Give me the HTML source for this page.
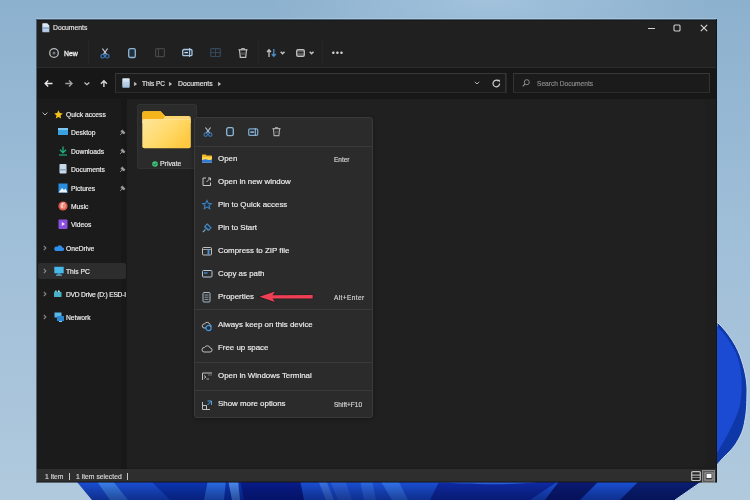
<!DOCTYPE html>
<html><head><meta charset="utf-8">
<style>
*{margin:0;padding:0;box-sizing:border-box}
html,body{width:750px;height:500px;overflow:hidden}
body{position:relative;font-family:"Liberation Sans",sans-serif;background:radial-gradient(ellipse 220px 60px at 490px 0px,rgba(170,200,225,.75),rgba(170,200,225,0)),linear-gradient(180deg,#8cb1ce 0%,#9fbed8 45%,#b0c9dd 100%);color:#fff}
.a{position:absolute}
.t{position:absolute;white-space:nowrap;line-height:1;will-change:transform;-webkit-text-stroke:0.15px currentColor}
svg{position:absolute;overflow:visible}
</style></head><body>
<svg class="a" style="left:0;top:0" width="750" height="500" viewBox="0 0 750 500">
  <defs>
    <clipPath id="bandclip"><path d="M77 482 L92 500 L675 500 L701 482 Z"/></clipPath>
    <linearGradient id="vdark" x1="0" y1="482" x2="0" y2="500" gradientUnits="userSpaceOnUse">
      <stop offset="0" stop-color="#000" stop-opacity="0"/><stop offset="1" stop-color="#000838" stop-opacity=".45"/>
    </linearGradient>
  </defs>
  <g clip-path="url(#bandclip)">
    <rect x="70" y="480" width="640" height="20" fill="#1a4fd8"/>
    <path d="M96 480 L112 480 L128 500 L110 500 Z" fill="#3a80f0"/>
    <path d="M150 480 L250 480 L262 500 L170 500 Z" fill="#0c36b8"/>
    <path d="M208 480 L226 480 L224 500 L204 500 Z" fill="#2a6ae8"/>
    <path d="M228 480 L238 480 L240 500 L232 500 Z" fill="#4a88f0"/>
    <path d="M240 480 L300 480 L304 500 L244 500 Z" fill="#081c90"/>
    <path d="M318 480 L326 480 L334 500 L326 500 Z" fill="#3a72e8"/>
    <path d="M330 480 L345 480 L352 500 L338 500 Z" fill="#2a60e0"/>
    <path d="M360 480 L372 480 L376 500 L364 500 Z" fill="#2c68e8"/>
    <path d="M380 480 L398 480 L408 500 L392 500 Z" fill="#3272f0"/>
    <path d="M440 480 L560 480 L530 500 L430 500 Z" fill="#0e2aa8"/>
    <path d="M430 482 C470 484 500 486 540 482 L520 480 L430 480 Z" fill="#2a60e0"/>
    <path d="M560 480 L600 480 L580 500 L545 500 Z" fill="#0a1a78"/>
    <path d="M600 480 L640 480 L620 500 L582 500 Z" fill="#1a50d8"/>
    <path d="M640 480 L710 480 L680 500 L620 500 Z" fill="#0a1f78"/>
    <rect x="70" y="480" width="640" height="20" fill="url(#vdark)"/>
  </g>
  <path d="M701 482 L675 500" stroke="#c4d8ea" stroke-width="1"/>
  <path d="M717 322 C729 333 738 348 741.5 360 C745.5 372 747.3 383 747 392 C746.8 405 746.5 412 745 420 C743.5 430 740.5 436 737.5 441 C733.5 448 729 452 725 456 C721 460 718.5 463 716 466 Z" fill="#0e38a8" stroke="#c4d8ea" stroke-width="1"/>
  <path d="M717 326 C728 337 736 350 739 362 C741.5 372 742 382 741.5 392 C741 404 738 414 733.6 422 C730 430 727 436 724.5 440 C721.5 445 719 450 717 453 Z" fill="#1b4bd2"/>
</svg>
<div class="a" style="left:36px;top:19px;width:681px;height:464px;background:rgba(20,24,28,.55);"></div>
<div class="a" style="left:37px;top:20px;width:680px;height:47px;background:#202020;"></div>
<div class="a" style="left:37px;top:20px;width:680px;height:1px;background:#161a1d;"></div>
<div class="a" style="left:37px;top:67px;width:680px;height:1px;background:#2c2c2c;"></div>
<div class="a" style="left:37px;top:68px;width:680px;height:31px;background:#171717;"></div>
<div class="a" style="left:37px;top:99px;width:84px;height:370px;background:#1b1b1b;"></div>
<div class="a" style="left:121px;top:99px;width:6px;height:370px;background:#181818;"></div>
<div class="a" style="left:127px;top:99px;width:590px;height:370px;background:#202020;"></div>
<div class="a" style="left:127px;top:467px;width:590px;height:2px;background:#1d1d1d;"></div>
<div class="a" style="left:705px;top:99px;width:11px;height:370px;background:#1e1e1e;"></div>
<div class="a" style="left:37px;top:469px;width:680px;height:12px;background:#2e2e2e;"></div>
<div class="a" style="left:37px;top:481px;width:680px;height:1px;background:#222;"></div>
<div class="a" style="left:36px;top:18px;width:681px;height:1px;background:rgba(200,220,238,.35);"></div>
<svg style="left:42px;top:22.5px" width="8" height="10" viewBox="0 0 8 10"><defs><linearGradient id="dgb" x1="0" y1="0" x2="0" y2="1"><stop offset="0" stop-color="#e8f0f8"/><stop offset="1" stop-color="#a8c4e0"/></linearGradient></defs><path d="M0.3 0.8 Q0.3 0.3 0.8 0.3 H5.2 L7.3 2.4 V8.8 Q7.3 9.3 6.8 9.3 H0.8 Q0.3 9.3 0.3 8.8 Z" fill="url(#dgb)"/><rect x="0.3" y="4.3" width="7" height="1.6" fill="#7a9cc0" opacity=".8"/></svg>
<div class="t" style="left:53.20px;top:25.24px;font-size:6.8px;color:#e6e6e6;font-weight:normal;">Documents</div>
<div class="a" style="left:648px;top:28px;width:7px;height:1px;background:#d0d0d0;"></div>
<svg style="left:673px;top:24px" width="8" height="8" viewBox="0 0 8 8"><rect x="1" y="1" width="6" height="6" rx="1" fill="none" stroke="#d0d0d0" stroke-width="1.1"/></svg>
<svg style="left:700px;top:24px" width="8" height="8" viewBox="0 0 8 8"><path d="M0.8 0.8 L7.2 7.2 M7.2 0.8 L0.8 7.2" stroke="#d8d8d8" stroke-width="1.1"/></svg>
<svg style="left:49px;top:47.5px" width="10" height="10" viewBox="0 0 10 10"><circle cx="5" cy="5" r="4.3" fill="none" stroke="#b8b8b8" stroke-width="1.3"/><circle cx="5" cy="5" r="1.5" fill="#6a7a8a"/></svg>
<div class="t" style="left:64.00px;top:51.06px;font-size:6.9px;color:#f0f0f0;font-weight:normal;-webkit-text-stroke:0.3px #f0f0f0">New</div>
<div class="a" style="left:88px;top:40px;width:1px;height:24px;background:#262626;"></div>
<svg style="left:99.5px;top:47.5px" width="10" height="11" viewBox="0 0 10 11"><path d="M2.4 0.5 L6.9 6.8 M7.6 0.5 L3.1 6.8" stroke="#c0c8d0" stroke-width="1.2" fill="none"/><circle cx="2.7" cy="8.2" r="1.8" fill="none" stroke="#3a78b8" stroke-width="1.2"/><circle cx="7.3" cy="8.2" r="1.8" fill="none" stroke="#3a78b8" stroke-width="1.2"/></svg>
<svg style="left:128px;top:47.5px" width="8" height="10" viewBox="0 0 8 10"><rect x="0.7" y="0.7" width="6.6" height="8.8" rx="1.6" fill="#22303c" stroke="#90b6d6" stroke-width="1.3"/></svg>
<svg style="left:155px;top:48px" width="10" height="9" viewBox="0 0 10 9"><rect x="0.6" y="0.6" width="8.8" height="8" rx="1" fill="none" stroke="#464646" stroke-width="1.2"/><path d="M3.5 0.6 V8.6" stroke="#464646" stroke-width="1"/></svg>
<svg style="left:181.5px;top:48px" width="11" height="9" viewBox="0 0 11 9"><rect x="0.7" y="1.5" width="9.3" height="6.2" rx="1.2" fill="#22303c" stroke="#a8c4dc" stroke-width="1.3"/><path d="M2.4 4.6 H6" stroke="#d0dce8" stroke-width="1.2"/><path d="M7.6 0 V9" stroke="#a8c4dc" stroke-width="1.1"/></svg>
<svg style="left:209.5px;top:48px" width="11" height="9" viewBox="0 0 11 9"><rect x="0.7" y="0.7" width="9.6" height="7.8" rx="1" fill="none" stroke="#34485a" stroke-width="1.2"/><path d="M5.5 0.7 V8.5 M0.7 4.6 H10.3" stroke="#34485a" stroke-width="1"/></svg>
<svg style="left:237.5px;top:47.5px" width="10" height="10" viewBox="0 0 10 10"><path d="M0.5 1.8 H9.5" stroke="#c0c0c0" stroke-width="1.2"/><path d="M3.5 1.8 V0.6 H6.5 V1.8" fill="none" stroke="#c0c0c0" stroke-width="1"/><path d="M1.5 1.8 L2.3 9.3 H7.7 L8.5 1.8" fill="none" stroke="#c0c0c0" stroke-width="1.2"/><path d="M4 4.2 V7 M6 4.2 V7" stroke="#909090" stroke-width=".8"/></svg>
<div class="a" style="left:258px;top:40px;width:1px;height:24px;background:#262626;"></div>
<svg style="left:266px;top:48.5px" width="11" height="8" viewBox="0 0 11 8"><path d="M3 8 V1 M1 3 L3 0.8 L5 3" fill="none" stroke="#c0c0c0" stroke-width="1.3"/><path d="M7.8 0 V7.2 M5.8 5 L7.8 7.2 L9.8 5" fill="none" stroke="#4a90c8" stroke-width="1.3"/></svg>
<svg style="left:280px;top:50.5px" width="6" height="4" viewBox="0 0 6 4"><path d="M0.7 0.7 L2.6 2.8 L4.5 0.7" fill="none" stroke="#c8c8c8" stroke-width="1.4"/></svg>
<svg style="left:296px;top:48.5px" width="9" height="8" viewBox="0 0 9 8"><rect x="0.7" y="0.7" width="7.6" height="6.6" rx="1.4" fill="#5a5a5a" stroke="#c0c0c0" stroke-width="1.3"/><path d="M1.5 3.6 H7.5" stroke="#2a2a2a" stroke-width="1"/></svg>
<svg style="left:309px;top:50.5px" width="6" height="4" viewBox="0 0 6 4"><path d="M0.7 0.7 L2.6 2.8 L4.5 0.7" fill="none" stroke="#c8c8c8" stroke-width="1.4"/></svg>
<div class="a" style="left:322px;top:40px;width:1px;height:24px;background:#262626;"></div>
<svg style="left:332px;top:51px" width="11" height="3.5" viewBox="0 0 11 3.5"><circle cx="1.3" cy="1.7" r="1.25" fill="#d8d8d8"/><circle cx="5.4" cy="1.7" r="1.25" fill="#d8d8d8"/><circle cx="9.5" cy="1.7" r="1.25" fill="#d8d8d8"/></svg>
<svg style="left:44px;top:80px" width="9" height="7" viewBox="0 0 9 7"><path d="M8.5 3.5 H1.2 M4.2 0.6 L1.2 3.5 L4.2 6.4" fill="none" stroke="#e8e8e8" stroke-width="1.4"/></svg>
<svg style="left:65px;top:80px" width="8" height="7" viewBox="0 0 8 7"><path d="M0.3 3.5 H7 M4 0.6 L7 3.5 L4 6.4" fill="none" stroke="#a0a0a0" stroke-width="1.4"/></svg>
<svg style="left:84px;top:82px" width="6" height="3" viewBox="0 0 6 3"><path d="M0.5 0.5 L2.9 2.6 L5.3 0.5" fill="none" stroke="#c8c8c8" stroke-width="1.2"/></svg>
<svg style="left:99.5px;top:80px" width="8" height="7" viewBox="0 0 8 7"><path d="M3.9 7 V1 M0.9 3.8 L3.9 0.8 L6.9 3.8" fill="none" stroke="#d8d8d8" stroke-width="1.4"/></svg>
<div class="a" style="left:115px;top:73px;width:391px;height:20px;background:#1b1b1b;border:1px solid #333;border-top-color:#383838;border-bottom-color:#2c2c2c"></div>
<svg style="left:121.5px;top:78px" width="8" height="10" viewBox="0 0 8 10"><defs><linearGradient id="dga" x1="0" y1="0" x2="0" y2="1"><stop offset="0" stop-color="#e4eef8"/><stop offset="1" stop-color="#9cbcdc"/></linearGradient></defs><rect x="0.3" y="0.3" width="7.4" height="9.4" rx="0.8" fill="url(#dga)"/><rect x="0.3" y="4.2" width="7.4" height="1.4" fill="#b0cce6" opacity=".7"/></svg>
<svg style="left:133.5px;top:81.5px" width="3" height="4" viewBox="0 0 3 4"><path d="M0.4 0.3 L2.6 2 L0.4 3.7 Z" fill="#d0d0d0" stroke="#d0d0d0" stroke-width=".5"/></svg>
<div class="t" style="left:142.00px;top:80.64px;font-size:6.45px;color:#e6e6e6;font-weight:normal;">This PC</div>
<svg style="left:169.2px;top:81.5px" width="3" height="4" viewBox="0 0 3 4"><path d="M0.4 0.3 L2.6 2 L0.4 3.7 Z" fill="#d0d0d0" stroke="#d0d0d0" stroke-width=".5"/></svg>
<div class="t" style="left:178.00px;top:80.60px;font-size:6.85px;color:#e6e6e6;font-weight:normal;">Documents</div>
<svg style="left:218px;top:81.5px" width="3" height="4" viewBox="0 0 3 4"><path d="M0.4 0.3 L2.6 2 L0.4 3.7 Z" fill="#d0d0d0" stroke="#d0d0d0" stroke-width=".5"/></svg>
<svg style="left:474px;top:81px" width="6" height="4" viewBox="0 0 6 4"><path d="M0.8 0.8 L3 3 L5.2 0.8" fill="none" stroke="#b0b0b0" stroke-width="1"/></svg>
<div class="a" style="left:506px;top:73px;width:1px;height:20px;background:#2a2a2a;"></div>
<svg style="left:492px;top:79px" width="9" height="9" viewBox="0 0 9 9"><path d="M7.6 4.5 A3.3 3.3 0 1 1 6.3 1.9" fill="none" stroke="#d0d0d0" stroke-width="1.2"/><path d="M5 0.8 L7.8 0.8 L7.8 3.6 Z" fill="#d0d0d0"/></svg>
<div class="a" style="left:513px;top:73px;width:197px;height:20px;background:#1b1b1b;border:1px solid #333;border-top-color:#383838;border-bottom-color:#2c2c2c"></div>
<svg style="left:522px;top:79px" width="8" height="8" viewBox="0 0 8 8"><circle cx="4.8" cy="3.2" r="2.5" fill="none" stroke="#8a8a8a" stroke-width="1"/><path d="M3 5 L0.7 7.3" stroke="#8a8a8a" stroke-width="1.1"/></svg>
<div class="t" style="left:536.50px;top:80.71px;font-size:6.6px;color:#8c8c8c;font-weight:normal;">Search Documents</div>
<svg style="left:42px;top:112px" width="6" height="4" viewBox="0 0 6 4"><path d="M0.6 0.6 L3 3 L5.4 0.6" fill="none" stroke="#b8b8b8" stroke-width="1"/></svg>
<svg style="left:54px;top:110px" width="9" height="9" viewBox="0 0 9 9"><path d="M4.5 0.3 L5.8 3.1 L8.8 3.4 L6.5 5.4 L7.2 8.5 L4.5 6.9 L1.8 8.5 L2.5 5.4 L0.2 3.4 L3.2 3.1 Z" fill="#f3c01c"/></svg>
<div class="t" style="left:66.00px;top:111.83px;font-size:6.7px;color:#f0f0f0;font-weight:normal;">Quick access</div>
<svg style="left:58px;top:127.4px" width="10" height="10" viewBox="0 0 10 10"><rect x="0" y="1" width="10" height="7" fill="#3aa0e0"/><rect x="0" y="1" width="10" height="2" fill="#7cc8f0"/></svg>
<div class="t" style="left:70.80px;top:130.43px;font-size:6.7px;color:#f0f0f0;font-weight:normal;">Desktop</div>
<svg style="left:119px;top:129.4px" width="7" height="7" viewBox="0 0 7 7"><path d="M1 6 L3 4 M2.2 2.2 L4.8 4.8 M3.3 1 L6 3.7 L4.6 5.1 L1.9 2.4 Z" fill="#a0a0a0" stroke="#a0a0a0" stroke-width=".8"/></svg>
<svg style="left:58px;top:145.6px" width="10" height="10" viewBox="0 0 10 10"><path d="M5 0.5 V6.5 M2 3.8 L5 6.8 L8 3.8" fill="none" stroke="#1fb07a" stroke-width="1.3"/><path d="M1 9 H9" stroke="#1fb07a" stroke-width="1.2"/></svg>
<div class="t" style="left:70.80px;top:148.63px;font-size:6.7px;color:#f0f0f0;font-weight:normal;">Downloads</div>
<svg style="left:119px;top:147.6px" width="7" height="7" viewBox="0 0 7 7"><path d="M1 6 L3 4 M2.2 2.2 L4.8 4.8 M3.3 1 L6 3.7 L4.6 5.1 L1.9 2.4 Z" fill="#a0a0a0" stroke="#a0a0a0" stroke-width=".8"/></svg>
<svg style="left:58px;top:164px" width="10" height="10" viewBox="0 0 10 10"><rect x="1.5" y="0" width="7" height="9.5" rx=".8" fill="#c8d8e8"/><rect x="1.5" y="5" width="7" height="1.5" fill="#90a8c0"/></svg>
<div class="t" style="left:70.80px;top:167.03px;font-size:6.7px;color:#f0f0f0;font-weight:normal;">Documents</div>
<svg style="left:119px;top:166px" width="7" height="7" viewBox="0 0 7 7"><path d="M1 6 L3 4 M2.2 2.2 L4.8 4.8 M3.3 1 L6 3.7 L4.6 5.1 L1.9 2.4 Z" fill="#a0a0a0" stroke="#a0a0a0" stroke-width=".8"/></svg>
<svg style="left:58px;top:182.5px" width="10" height="10" viewBox="0 0 10 10"><rect x="0.5" y="0.5" width="9" height="9" fill="#2a8ee0"/><path d="M0.5 9.5 L4 5 L6 7 L7.5 5.5 L9.5 9.5 Z" fill="#e8f4ff"/></svg>
<div class="t" style="left:70.80px;top:185.53px;font-size:6.7px;color:#f0f0f0;font-weight:normal;">Pictures</div>
<svg style="left:119px;top:184.5px" width="7" height="7" viewBox="0 0 7 7"><path d="M1 6 L3 4 M2.2 2.2 L4.8 4.8 M3.3 1 L6 3.7 L4.6 5.1 L1.9 2.4 Z" fill="#a0a0a0" stroke="#a0a0a0" stroke-width=".8"/></svg>
<svg style="left:58px;top:201px" width="10" height="10" viewBox="0 0 10 10"><circle cx="5" cy="5" r="4.6" fill="#e05a4a"/><circle cx="5" cy="5" r="3" fill="#f08a80"/><path d="M4 7 V2.5 L6.5 2" stroke="#fff" stroke-width=".9" fill="none"/></svg>
<div class="t" style="left:70.80px;top:204.03px;font-size:6.7px;color:#f0f0f0;font-weight:normal;">Music</div>
<svg style="left:58px;top:219.3px" width="10" height="10" viewBox="0 0 10 10"><rect x="0.5" y="0.5" width="9" height="9.5" rx="1" fill="#8a4ee0"/><path d="M3.8 3 L7 5 L3.8 7 Z" fill="#f0e6ff"/></svg>
<div class="t" style="left:70.80px;top:222.33px;font-size:6.7px;color:#f0f0f0;font-weight:normal;">Videos</div>
<div class="a" style="left:38px;top:263px;width:88px;height:16px;background:#2d2d2d;border-radius:2px"></div>
<svg style="left:43px;top:245.3px" width="4" height="6" viewBox="0 0 4 6"><path d="M0.8 0.8 L2.9 3 L0.8 5.2" fill="none" stroke="#8a8a8a" stroke-width="1.1"/></svg>
<svg style="left:54px;top:242.8px" width="10" height="10" viewBox="0 0 10 10"><path d="M1.5 8 H8.5 A1.7 1.7 0 0 0 8.5 4.6 A2.6 2.6 0 0 0 3.6 3.8 A2 2 0 0 0 1.5 8 Z" fill="#2f8ee8"/></svg>
<div class="t" style="left:65.70px;top:245.83px;font-size:6.7px;color:#f0f0f0;font-weight:normal;">OneDrive</div>
<svg style="left:43px;top:268.2px" width="4" height="6" viewBox="0 0 4 6"><path d="M0.8 0.8 L2.9 3 L0.8 5.2" fill="none" stroke="#8a8a8a" stroke-width="1.1"/></svg>
<svg style="left:54px;top:265.7px" width="10" height="10" viewBox="0 0 10 10"><rect x="0.3" y="0.8" width="9.4" height="6.5" fill="#48b8e8"/><rect x="3.5" y="7.3" width="3" height="1.5" fill="#3a9ad0"/><rect x="2" y="8.7" width="6" height=".9" fill="#7ccaf0"/></svg>
<div class="t" style="left:65.70px;top:268.73px;font-size:6.7px;color:#f0f0f0;font-weight:normal;">This PC</div>
<svg style="left:43px;top:291.0px" width="4" height="6" viewBox="0 0 4 6"><path d="M0.8 0.8 L2.9 3 L0.8 5.2" fill="none" stroke="#8a8a8a" stroke-width="1.1"/></svg>
<svg style="left:54px;top:288.5px" width="10" height="10" viewBox="0 0 10 10"><rect x="0" y="3" width="7.5" height="5" rx=".5" fill="#48b0c8"/><path d="M3.5 3 L4.8 0.8 L6.2 3 Z" fill="#a8e0ea"/><rect x="0.8" y="1.6" width="2" height="1.6" fill="#70c8d8"/></svg>
<div class="t" style="left:65.70px;top:291.53px;font-size:6.7px;color:#f0f0f0;font-weight:normal;width:60.3px;overflow:hidden;padding-bottom:2px;letter-spacing:-0.22px">DVD Drive (D:) ESD-I</div>
<svg style="left:43px;top:314.0px" width="4" height="6" viewBox="0 0 4 6"><path d="M0.8 0.8 L2.9 3 L0.8 5.2" fill="none" stroke="#8a8a8a" stroke-width="1.1"/></svg>
<svg style="left:54px;top:311.5px" width="10" height="10" viewBox="0 0 10 10"><rect x="0.5" y="0.5" width="7" height="5" fill="#58b8e8"/><rect x="3" y="4" width="7" height="5" fill="#2a86d0"/><rect x="5" y="9" width="3" height="1" fill="#8ccff0"/></svg>
<div class="t" style="left:65.70px;top:314.53px;font-size:6.7px;color:#f0f0f0;font-weight:normal;">Network</div>
<div class="a" style="left:137px;top:104px;width:60px;height:65px;background:#2b2b2b;border-radius:2px;border:1px solid #323232"></div>
<svg style="left:142px;top:111px" width="50" height="40" viewBox="0 0 50 40"><defs><linearGradient id="fg" x1="0" y1="0" x2="1" y2="0.6"><stop offset="0" stop-color="#fee59c"/><stop offset="0.55" stop-color="#ffda6c"/><stop offset="1" stop-color="#ffca42"/></linearGradient></defs>
<path d="M0.3 2.3 A2 2 0 0 1 2.3 0.3 H18.6 L23 5 H46.8 A2 2 0 0 1 48.8 7 V12 H0.3 Z" fill="#fcd670"/>
<path d="M0.3 2.3 A2 2 0 0 1 2.3 0.3 H18.6 L23 5 L21 8.5 H0.3 Z" fill="#f4b51c"/>
<rect x="0.3" y="8.3" width="48.5" height="29" rx="2" fill="url(#fg)"/>
<rect x="0.3" y="8.3" width="48.5" height="0.8" fill="#fff0c0" opacity=".5"/></svg>
<svg style="left:151.5px;top:160.5px" width="6" height="6" viewBox="0 0 6 6"><circle cx="3" cy="3" r="2.8" fill="#3cc878"/><path d="M1.6 3 L2.7 4 L4.4 2.1" fill="none" stroke="#0c3a20" stroke-width=".8"/></svg>
<div class="t" style="left:159.60px;top:160.96px;font-size:6.9px;color:#e6e6e6;font-weight:normal;">Private</div>
<div class="a" style="left:194px;top:117px;width:179px;height:301px;background:transparent;border-radius:3px;box-shadow:0 1px 4px rgba(0,0,0,.3)"></div>
<div class="a" style="left:194px;top:117px;width:179px;height:301px;background:#2b2b2b;border-radius:3px;border:1px solid #3a3a3a"></div>
<div class="a" style="left:195px;top:146px;width:177px;height:1px;background:#3a3a3a;"></div>
<svg style="left:202.5px;top:126.5px" width="10" height="10" viewBox="0 0 10 10"><path d="M2.4 0.5 L6.8 6.2 M7.6 0.5 L3.2 6.2" stroke="#b0bcc8" stroke-width="1.2" fill="none"/><circle cx="2.7" cy="7.6" r="1.7" fill="none" stroke="#3a72a8" stroke-width="1.2"/><circle cx="7.3" cy="7.6" r="1.7" fill="none" stroke="#3a72a8" stroke-width="1.2"/></svg>
<svg style="left:226px;top:127px" width="8" height="9" viewBox="0 0 8 9"><rect x="0.7" y="0.7" width="6.6" height="8" rx="1.6" fill="#243240" stroke="#94b4cc" stroke-width="1.3"/></svg>
<svg style="left:248px;top:127.5px" width="10" height="8" viewBox="0 0 10 8"><rect x="0.7" y="0.9" width="9" height="6.4" rx="1.2" fill="#22303c" stroke="#7ca4c4" stroke-width="1.3"/><path d="M2.3 4.1 H6" stroke="#c8d8e8" stroke-width="1.2"/><path d="M7.3 0 V8" stroke="#94b4cc" stroke-width="1.1"/></svg>
<svg style="left:272px;top:127px" width="9" height="9.5" viewBox="0 0 9 9.5"><path d="M0.5 1.6 H8.5" stroke="#a8a8a8" stroke-width="1.2"/><path d="M1.4 1.6 L2.1 8.7 H6.9 L7.6 1.6" fill="none" stroke="#a8a8a8" stroke-width="1.2"/><path d="M3.2 0.5 H5.8" stroke="#a8a8a8" stroke-width="1"/><path d="M3.8 4 V6.6 M5.2 4 V6.6" stroke="#707070" stroke-width=".7"/></svg>
<svg style="left:202px;top:154.2px" width="10" height="10" viewBox="0 0 10 10"><path d="M0 1.2 Q0 0.5 0.7 0.5 H3.6 L4.6 1.5 H9.3 Q10 1.5 10 2.2 V8.8 H0 Z" fill="#f0b820"/><path d="M0 3 H10 V8.8 H0 Z" fill="#ffd452"/><path d="M0 6.2 Q3 4.6 5 5.6 Q7.5 6.8 10 5.2 V8.8 H0 Z" fill="#2f7ad8"/></svg>
<div class="t" style="left:217.50px;top:155.11px;font-size:7.9px;color:#f0f0f0;font-weight:normal;">Open</div>
<div class="t" style="left:334.20px;top:156.90px;font-size:6.5px;color:#d8d8d8;font-weight:normal;">Enter</div>
<svg style="left:202px;top:177.2px" width="10" height="10" viewBox="0 0 10 10"><path d="M4 1 H1 V8.5 H8.5 V5.5" fill="none" stroke="#c8c8c8" stroke-width="1"/><path d="M4.5 5 L8.5 1 M6 1 H8.5 V3.5" fill="none" stroke="#c8c8c8" stroke-width="1"/></svg>
<div class="t" style="left:217.50px;top:178.11px;font-size:7.9px;color:#f0f0f0;font-weight:normal;">Open in new window</div>
<svg style="left:202px;top:200.2px" width="10" height="10" viewBox="0 0 10 10"><path d="M5 0.6 L6.3 3.3 L9.3 3.6 L7 5.6 L7.7 8.7 L5 7.1 L2.3 8.7 L3 5.6 L0.7 3.6 L3.7 3.3 Z" fill="#1c3248" stroke="#4080b8" stroke-width="1.1"/></svg>
<div class="t" style="left:217.50px;top:201.11px;font-size:7.9px;color:#f0f0f0;font-weight:normal;">Pin to Quick access</div>
<svg style="left:202px;top:223.2px" width="10" height="10" viewBox="0 0 10 10"><path d="M0.8 9.2 L3.5 6.5" stroke="#7aa8c8" stroke-width="1.1"/><path d="M2.6 3.8 L6.2 7.4 M5.2 1 L9 4.8 L6.6 7.2 L2.8 3.4 Z" fill="#1c3248" stroke="#4a88c0" stroke-width="1.1"/></svg>
<div class="t" style="left:217.50px;top:224.11px;font-size:7.9px;color:#f0f0f0;font-weight:normal;">Pin to Start</div>
<svg style="left:202px;top:246.2px" width="10" height="10" viewBox="0 0 10 10"><rect x="0.5" y="1.5" width="9" height="7.5" rx="1" fill="none" stroke="#c0c0c0" stroke-width="1"/><path d="M0.5 3.5 H9.5" stroke="#c0c0c0" stroke-width=".8"/><rect x="5.5" y="3.5" width="2" height="5.5" fill="#4a90d0"/></svg>
<div class="t" style="left:217.50px;top:247.11px;font-size:7.9px;color:#f0f0f0;font-weight:normal;">Compress to ZIP file</div>
<svg style="left:202px;top:269.2px" width="10" height="10" viewBox="0 0 10 10"><rect x="0.5" y="1.5" width="9.5" height="6.5" rx="1" fill="none" stroke="#b8c8d8" stroke-width="1"/><path d="M2 4 H5.5" stroke="#4a90d0" stroke-width="1.4"/></svg>
<div class="t" style="left:217.50px;top:270.11px;font-size:7.9px;color:#f0f0f0;font-weight:normal;">Copy as path</div>
<svg style="left:202px;top:292.2px" width="10" height="10" viewBox="0 0 10 10"><rect x="1" y="0.5" width="7" height="9.5" rx="1" fill="none" stroke="#a8b8c8" stroke-width="1"/><path d="M2.5 3 H6.5 M2.5 5.2 H6.5 M2.5 7.4 H6.5" stroke="#a8b8c8" stroke-width=".8"/></svg>
<div class="t" style="left:217.50px;top:293.11px;font-size:7.9px;color:#f0f0f0;font-weight:normal;">Properties</div>
<div class="t" style="left:334.20px;top:294.90px;font-size:6.5px;color:#d8d8d8;font-weight:normal;letter-spacing:0.4px">Alt+Enter</div>
<svg style="left:202px;top:320.5px" width="10" height="10" viewBox="0 0 10 10"><path d="M2 7 H7.5 A1.8 1.8 0 0 0 7.8 3.5 A2.8 2.8 0 0 0 2.5 3 A2 2 0 0 0 2 7 Z" fill="none" stroke="#c0c0c0" stroke-width="1"/><circle cx="6.5" cy="7" r="2.6" fill="#2b2b2b" stroke="#3a9ae8" stroke-width="1.2"/></svg>
<div class="t" style="left:217.50px;top:321.41px;font-size:7.9px;color:#f0f0f0;font-weight:normal;">Always keep on this device</div>
<svg style="left:202px;top:343.5px" width="10" height="10" viewBox="0 0 10 10"><path d="M2 8 H8 A2 2 0 0 0 8.2 4 A3 3 0 0 0 2.6 3.5 A2.2 2.2 0 0 0 2 8 Z" fill="none" stroke="#c0c0c0" stroke-width="1"/></svg>
<div class="t" style="left:217.50px;top:344.41px;font-size:7.9px;color:#f0f0f0;font-weight:normal;">Free up space</div>
<svg style="left:202px;top:371.5px" width="10" height="10" viewBox="0 0 10 10"><path d="M0.5 1 H10 M0.5 1 V8" stroke="#c0c0c0" stroke-width="1"/><path d="M2 3.5 L4 5 L2 6.5" fill="none" stroke="#c0c0c0" stroke-width=".9"/><path d="M4.5 7 H7" stroke="#c0c0c0" stroke-width=".9"/><path d="M6 3 H10" stroke="#808080" stroke-width=".8"/></svg>
<div class="t" style="left:217.50px;top:372.41px;font-size:7.9px;color:#f0f0f0;font-weight:normal;">Open in Windows Terminal</div>
<svg style="left:202px;top:399.5px" width="10" height="10" viewBox="0 0 10 10"><path d="M0.5 2 V9.5 H8 M0.5 5.5 H4.5 V9.5" fill="none" stroke="#c0c0c0" stroke-width="1"/><path d="M5.5 1 H9.5 V5 M5.5 5 L9.5 1" fill="none" stroke="#4aa0e0" stroke-width="1"/></svg>
<div class="t" style="left:217.50px;top:400.41px;font-size:7.9px;color:#f0f0f0;font-weight:normal;">Show more options</div>
<div class="t" style="left:334.20px;top:402.20px;font-size:6.5px;color:#d8d8d8;font-weight:normal;">Shift+F10</div>
<div class="a" style="left:195px;top:309px;width:177px;height:1px;background:#3a3a3a;"></div>
<div class="a" style="left:195px;top:362px;width:177px;height:1px;background:#3a3a3a;"></div>
<div class="a" style="left:195px;top:390px;width:177px;height:1px;background:#3a3a3a;"></div>
<svg style="left:258px;top:290px" width="57" height="14" viewBox="0 0 57 14"><path d="M1.5 6.8 L17 1.6 L14.5 5.2 L54.7 5.1 L54.7 8.5 L14.5 8.4 L17 12 Z" fill="none" stroke="#1a1416" stroke-width="1.6" opacity=".45"/><path d="M1.5 6.8 L17 1.6 L14.5 5.2 L54.7 5.1 L54.7 8.5 L14.5 8.4 L17 12 Z" fill="#ee3f55"/></svg>
<div class="t" style="left:44.70px;top:473.54px;font-size:6.8px;color:#d8d8d8;font-weight:normal;">1 item</div>
<div class="a" style="left:69px;top:473px;width:1px;height:7px;background:#c8c8c8;"></div>
<div class="t" style="left:76.00px;top:473.54px;font-size:6.8px;color:#d8d8d8;font-weight:normal;">1 item selected</div>
<div class="a" style="left:127px;top:473px;width:1px;height:7px;background:#c8c8c8;"></div>
<svg style="left:690.5px;top:471px" width="10" height="10" viewBox="0 0 10 10"><rect x="0.7" y="0.7" width="8.6" height="8.8" rx="1" fill="#2a2a2a" stroke="#c4c4c4" stroke-width="1.2"/><path d="M0.8 4.1 H9.2" stroke="#c4c4c4" stroke-width="1.1"/><path d="M0.8 6.5 H9.2" stroke="#9a9a9a" stroke-width=".8"/></svg>
<svg style="left:702px;top:470px" width="13" height="13" viewBox="0 0 13 13"><rect x="0.5" y="0.5" width="12" height="12" fill="#5a5a5a" stroke="#8a8a8a" stroke-width="1"/><rect x="3" y="3" width="8" height="7" fill="#3a3a3a" stroke="#a8a8a8" stroke-width="1"/><rect x="4.5" y="4" width="5" height="4" fill="#f8f8f8"/></svg>
<div class="a" style="left:716px;top:19px;width:1px;height:463px;background:#151515;"></div>

</body></html>
